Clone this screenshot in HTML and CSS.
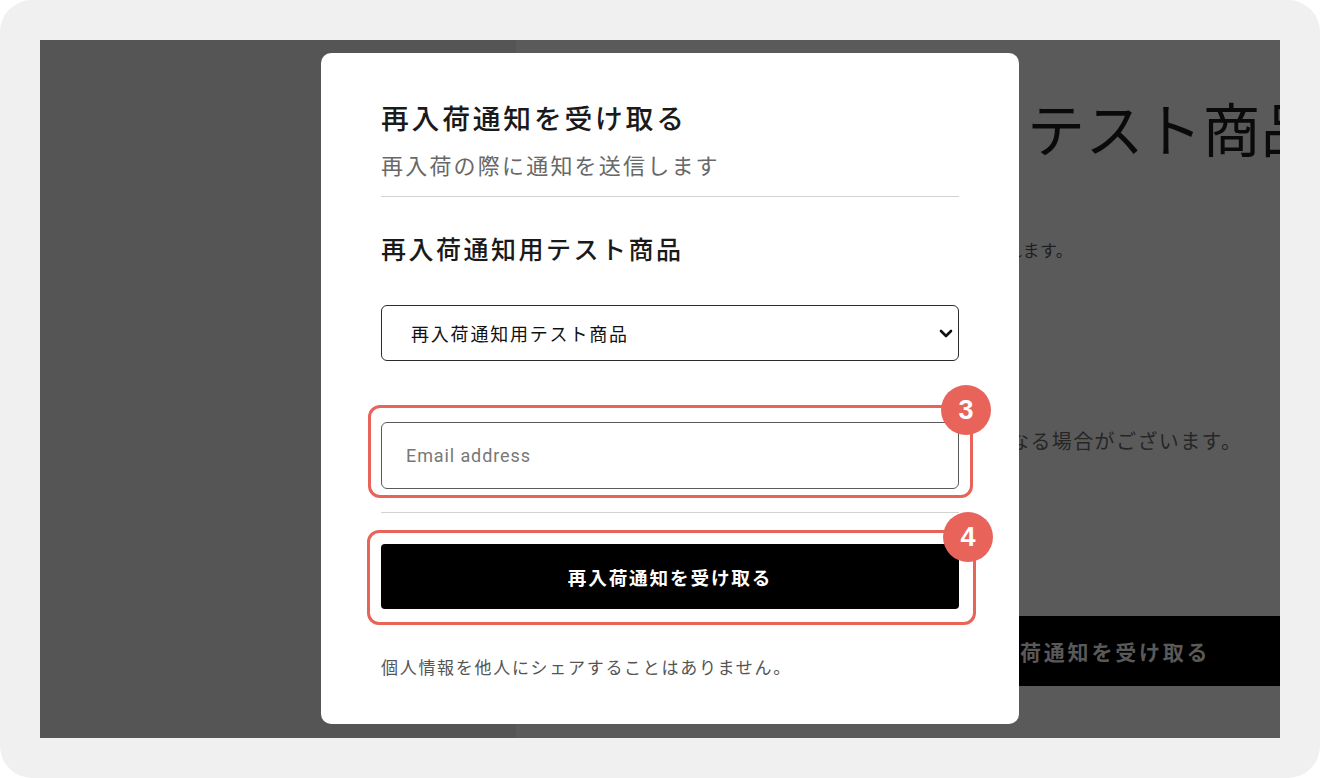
FILE: index.html
```html
<!DOCTYPE html>
<html lang="ja">
<head>
<meta charset="utf-8">
<title>再入荷通知を受け取る</title>
<link rel="stylesheet" href="styles.css">
</head>
<body>
<div class="frame">
  <div class="screen">
    <div class="pane-left"></div>
    <div class="pane-right">
      <div class="info">
        <h1 class="bg-title">テスト商品</h1>
        <p class="bg-note">れます。</p>
        <p class="bg-text">なる場合がございます。</p>
        <div class="bg-button">荷通知を受け取る</div>
      </div>
    </div>

    <div class="modal">
      <h2 class="modal-title">再入荷通知を受け取る</h2>
      <p class="modal-sub">再入荷の際に通知を送信します</p>
      <hr class="rule rule-top">
      <h3 class="product">再入荷通知用テスト商品</h3>
      <div class="select-wrap">
        <select class="variant">
          <option>再入荷通知用テスト商品</option>
        </select>
        <svg class="chevron" width="14" height="9" viewBox="0 0 14 9" aria-hidden="true">
          <path d="M2 2 L7 7 L12 2" fill="none" stroke="#111" stroke-width="2.6" stroke-linecap="round" stroke-linejoin="round"/>
        </svg>
      </div>
      <div class="field field-email">
        <input class="email" type="email" placeholder="Email address">
        <span class="ring ring-email"></span>
        <span class="badge badge-email">3</span>
      </div>
      <hr class="rule rule-bottom">
      <div class="field field-button">
        <button class="submit" type="button">再入荷通知を受け取る</button>
        <span class="ring ring-button"></span>
        <span class="badge badge-button">4</span>
      </div>
      <p class="privacy">個人情報を他人にシェアすることはありません。</p>
    </div>
  </div>
</div>
</body>
</html>
```

FILE: styles.css
```css
* { box-sizing: border-box; }

html, body {
  margin: 0;
  padding: 0;
  background: #ffffff;
}

body {
  font-family: "Noto Sans CJK JP", "Noto Sans", sans-serif;
}

.frame {
  width: 1320px;
  height: 778px;
  padding: 40px;
  background: #f0f0f0;
  border-radius: 32px;
}

.screen {
  position: relative;
  display: flex;
  height: 698px;
  overflow: hidden;
}

.pane-left {
  width: 476px;
  background: #555555;
}

.pane-right {
  flex: 1;
  background: #5a5a5a;
  overflow: hidden;
}

.info {
  display: flex;
  flex-direction: column;
  padding-left: 484px;
  padding-top: 52px;
}

.bg-title {
  margin: 0 0 0 27px;
  font-size: 58px;
  font-weight: 400;
  line-height: 70px;
  letter-spacing: 0.5px;
  color: #0a0a0a;
  white-space: nowrap;
}

.bg-note {
  margin: 76px 0 0 5px;
  font-size: 17px;
  line-height: 24px;
  letter-spacing: 0.5px;
  color: #1f1f1f;
  white-space: nowrap;
}

.bg-text {
  margin: 164px 0 0 9px;
  font-size: 20px;
  line-height: 30px;
  letter-spacing: 1.4px;
  color: #262626;
  white-space: nowrap;
}

.bg-button {
  margin-top: 160px;
  height: 70px;
  padding-left: 20px;
  display: flex;
  align-items: center;
  background: #000;
  color: #595959;
  font-size: 21px;
  font-weight: 700;
  letter-spacing: 2.8px;
  white-space: nowrap;
}

/* modal */
.modal {
  position: absolute;
  left: 281px;
  top: 13px;
  width: 698px;
  height: 671px;
  padding: 45px 60px 0;
  background: #ffffff;
  border-radius: 10px;
  display: flex;
  flex-direction: column;
}

.modal-title {
  margin: 0;
  font-size: 27.8px;
  font-weight: 500;
  line-height: 38px;
  letter-spacing: 0.1em;
  color: #1a1a1a;
}

.modal-sub {
  margin: 13px 0 0;
  font-size: 22px;
  font-weight: 400;
  line-height: 30px;
  letter-spacing: 0.1em;
  color: #686868;
}

.rule {
  margin: 0;
  border: 0;
  height: 1px;
  background: #d2d2d2;
}

.rule-top { margin-top: 17px; }

.product {
  margin: 34px 0 0;
  font-size: 25px;
  font-weight: 500;
  line-height: 35px;
  letter-spacing: 0.1em;
  color: #1a1a1a;
}

.select-wrap {
  position: relative;
  margin-top: 39px;
}

.variant {
  display: block;
  width: 100%;
  height: 56px;
  padding: 0 40px 0 29px;
  border: 1px solid #2b2b2b;
  border-radius: 6px;
  background: #fff;
  -webkit-appearance: none;
  appearance: none;
  font-family: "Noto Sans CJK JP", sans-serif;
  font-size: 18px;
  letter-spacing: 0.1em;
  color: #111;
}

.chevron {
  position: absolute;
  right: 6px;
  top: 24px;
  pointer-events: none;
}

.field {
  position: relative;
}

.field-email { margin-top: 61px; }

.email {
  display: block;
  width: 100%;
  height: 67px;
  padding: 0 24px;
  border: 1px solid #5a5a5a;
  border-radius: 6px;
  font-family: Roboto, "Liberation Sans", sans-serif;
  font-size: 18px;
  letter-spacing: 0.9px;
  color: #111;
  background: #fff;
}

.email::placeholder {
  color: #777;
}

.rule-bottom { margin-top: 23px; }

.field-button { margin-top: 31px; }

.submit {
  display: block;
  width: 100%;
  height: 65px;
  border: 0;
  border-radius: 4px;
  background: #000;
  color: #fff;
  font-family: "Noto Sans CJK JP", sans-serif;
  font-size: 18.6px;
  font-weight: 700;
  letter-spacing: 0.1em;
}

.privacy {
  margin: 45px 0 0;
  font-size: 17px;
  line-height: 25px;
  letter-spacing: 0.1em;
  color: #555;
}

/* annotations */
.ring {
  position: absolute;
  border: 3px solid #e8645a;
  border-radius: 12px;
  pointer-events: none;
}

.ring-email {
  top: -17px;
  left: -13px;
  right: -14px;
  bottom: -9px;
}

.ring-button {
  top: -14px;
  left: -14px;
  right: -17px;
  bottom: -16px;
}

.badge {
  position: absolute;
  width: 50px;
  height: 50px;
  border-radius: 50%;
  background: #e8645a;
  color: #fff;
  font-family: "Liberation Sans", Arial, sans-serif;
  font-weight: 700;
  font-size: 27px;
  line-height: 50px;
  text-align: center;
}

.badge-email {
  top: -37px;
  right: -32px;
}

.badge-button {
  top: -32px;
  right: -34px;
}
```
